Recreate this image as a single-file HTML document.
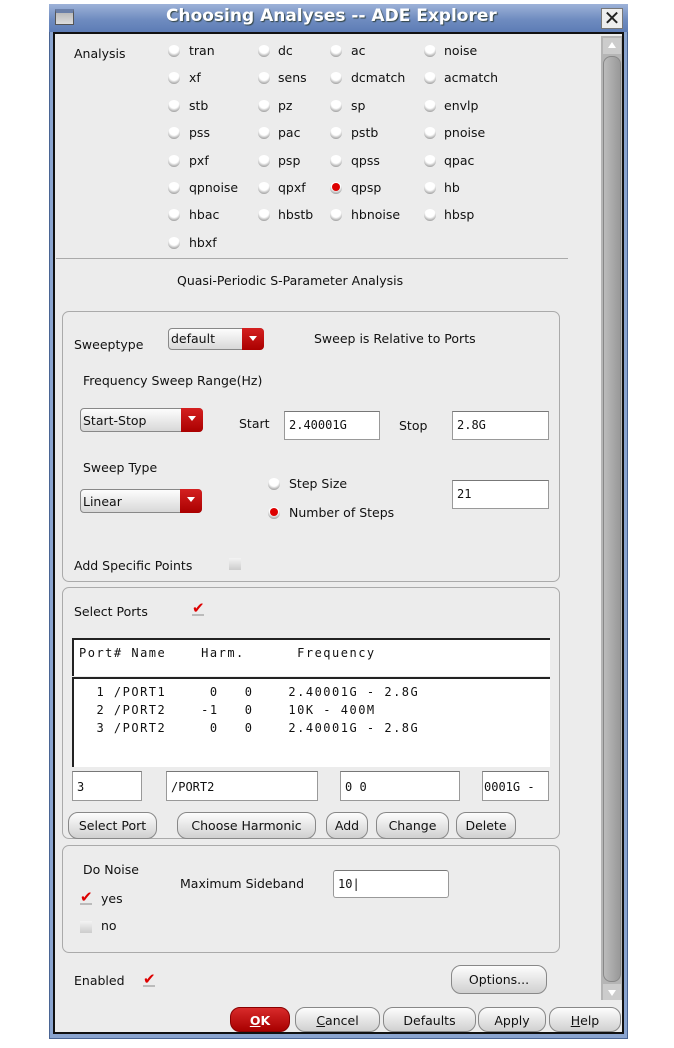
<!DOCTYPE html>
<html><head><style>
*{box-sizing:border-box;margin:0;padding:0}
body{width:674px;height:1048px;background:#fff;position:relative;overflow:hidden;font-family:"DejaVu Sans","Liberation Sans",sans-serif;font-size:12.5px;color:#111}
.a{position:absolute;white-space:pre}
.win{position:absolute;left:49px;top:4px;width:579px;height:1035px;background:#8aa4cf;border:1px solid #4a6594}
.title{position:absolute;left:49px;top:4px;width:579px;height:28px;background:linear-gradient(#9db2d8,#6f8cc0 55%,#5d7cb5);}
.content{position:absolute;left:53px;top:32px;width:571px;height:1002px;background:#ececec;border:2px solid #111}
.r{position:absolute;width:12px;height:12px;border-radius:50%;background:radial-gradient(circle at 50% 30%,#fff 45%,#bbb 70%,#777)}
.r.on::after{content:"";position:absolute;left:2px;top:1px;width:8px;height:8px;border-radius:50%;background:#d00}
.box{position:absolute;border:1px solid #aaa;border-radius:7px}
.inp{position:absolute;background:#fff;border:1px solid #999;border-top-color:#777;font-family:"DejaVu Sans Mono","Liberation Mono",monospace;font-size:12px;padding:6px 0 0 4px}
.dd{position:absolute;border:1px solid #888;border-radius:4px;background:linear-gradient(#fdfdfd,#d8d8d8);padding:2px 0 0 2px}
.dd b{position:absolute;right:-1px;top:-1px;bottom:-1px;width:22px;background:linear-gradient(#d42020,#a00);border-radius:0 4px 4px 0}
.dd b::after{content:"";position:absolute;left:7px;top:8px;border:4px solid transparent;border-top:5px solid #fff}
.btn{position:absolute;border:1px solid #888;border-radius:10px;background:linear-gradient(#fdfdfd,#d0d0d0);text-align:center;padding-top:5px}
.ck{position:absolute;width:12px;height:12px;background:linear-gradient(#f4f4f4,#ccc)}
.ck.on::after{content:"✔";position:absolute;left:0;top:-5px;color:#d00;font-size:15px;font-weight:bold}
.mono{font-family:"DejaVu Sans Mono","Liberation Mono",monospace;font-size:12px;letter-spacing:1.5px}
</style></head><body>
<div class="win"></div>
<div class="title"></div>
<div class="a" style="left:55px;top:9px;width:19px;height:16px;background:linear-gradient(#bbb,#ddd);border:1px solid #555;border-top:4px solid #6a7fa8"></div>
<div class="a" style="left:166px;top:6px;font-weight:bold;font-size:17px;color:#fff;text-shadow:1px 1px 1px #344">Choosing Analyses -- ADE Explorer</div>
<div class="a" style="left:601px;top:8px;width:22px;height:21px;background:#eee;border:1px solid #777;font-size:20px;line-height:19px;text-align:center;color:#222">✕</div>
<div class="content"></div>
<div class="a" style="left:601px;top:36px;width:21px;height:964px;background:#b5b5b5"></div>
<div class="a" style="left:603px;top:38px;width:18px;height:16px;background:#ccc"></div>
<div class="a" style="left:608px;top:42px;border:4px solid transparent;border-bottom:6px solid #fff;border-top:0"></div>
<div class="a" style="left:603px;top:56px;width:18px;height:926px;background:linear-gradient(90deg,#bbb,#999);border-radius:8px;border:1px solid #888"></div>
<div class="a" style="left:603px;top:984px;width:18px;height:16px;background:#ccc"></div>
<div class="a" style="left:608px;top:990px;border:4px solid transparent;border-top:6px solid #fff;border-bottom:0"></div>

<div class="a" style="left:74px;top:46px">Analysis</div>
<div class="r" style="left:168px;top:45px"></div><div class="a" style="left:189px;top:43px">tran</div>
<div class="r" style="left:258px;top:45px"></div><div class="a" style="left:278px;top:43px">dc</div>
<div class="r" style="left:330px;top:45px"></div><div class="a" style="left:351px;top:43px">ac</div>
<div class="r" style="left:424px;top:45px"></div><div class="a" style="left:444px;top:43px">noise</div>
<div class="r" style="left:168px;top:72px"></div><div class="a" style="left:189px;top:70px">xf</div>
<div class="r" style="left:258px;top:72px"></div><div class="a" style="left:278px;top:70px">sens</div>
<div class="r" style="left:330px;top:72px"></div><div class="a" style="left:351px;top:70px">dcmatch</div>
<div class="r" style="left:424px;top:72px"></div><div class="a" style="left:444px;top:70px">acmatch</div>
<div class="r" style="left:168px;top:100px"></div><div class="a" style="left:189px;top:98px">stb</div>
<div class="r" style="left:258px;top:100px"></div><div class="a" style="left:278px;top:98px">pz</div>
<div class="r" style="left:330px;top:100px"></div><div class="a" style="left:351px;top:98px">sp</div>
<div class="r" style="left:424px;top:100px"></div><div class="a" style="left:444px;top:98px">envlp</div>
<div class="r" style="left:168px;top:127px"></div><div class="a" style="left:189px;top:125px">pss</div>
<div class="r" style="left:258px;top:127px"></div><div class="a" style="left:278px;top:125px">pac</div>
<div class="r" style="left:330px;top:127px"></div><div class="a" style="left:351px;top:125px">pstb</div>
<div class="r" style="left:424px;top:127px"></div><div class="a" style="left:444px;top:125px">pnoise</div>
<div class="r" style="left:168px;top:155px"></div><div class="a" style="left:189px;top:153px">pxf</div>
<div class="r" style="left:258px;top:155px"></div><div class="a" style="left:278px;top:153px">psp</div>
<div class="r" style="left:330px;top:155px"></div><div class="a" style="left:351px;top:153px">qpss</div>
<div class="r" style="left:424px;top:155px"></div><div class="a" style="left:444px;top:153px">qpac</div>
<div class="r" style="left:168px;top:182px"></div><div class="a" style="left:189px;top:180px">qpnoise</div>
<div class="r" style="left:258px;top:182px"></div><div class="a" style="left:278px;top:180px">qpxf</div>
<div class="r on" style="left:330px;top:182px"></div><div class="a" style="left:351px;top:180px">qpsp</div>
<div class="r" style="left:424px;top:182px"></div><div class="a" style="left:444px;top:180px">hb</div>
<div class="r" style="left:168px;top:209px"></div><div class="a" style="left:189px;top:207px">hbac</div>
<div class="r" style="left:258px;top:209px"></div><div class="a" style="left:278px;top:207px">hbstb</div>
<div class="r" style="left:330px;top:209px"></div><div class="a" style="left:351px;top:207px">hbnoise</div>
<div class="r" style="left:424px;top:209px"></div><div class="a" style="left:444px;top:207px">hbsp</div>
<div class="r" style="left:168px;top:237px"></div><div class="a" style="left:189px;top:235px">hbxf</div>

<div class="a" style="left:56px;top:258px;width:512px;height:1px;background:#aaa"></div>
<div class="a" style="left:177px;top:273px">Quasi-Periodic S-Parameter Analysis</div>

<div class="box" style="left:62px;top:311px;width:498px;height:271px"></div>
<div class="a" style="left:74px;top:337px">Sweeptype</div>
<div class="dd" style="left:168px;top:328px;width:96px;height:22px">default<b></b></div>
<div class="a" style="left:314px;top:331px">Sweep is Relative to Ports</div>
<div class="a" style="left:83px;top:373px">Frequency Sweep Range(Hz)</div>
<div class="dd" style="left:80px;top:408px;width:123px;height:24px;padding-top:4px">Start-Stop<b></b></div>
<div class="a" style="left:239px;top:416px">Start</div>
<div class="inp" style="left:284px;top:411px;width:96px;height:29px">2.40001G</div>
<div class="a" style="left:399px;top:418px">Stop</div>
<div class="inp" style="left:452px;top:411px;width:97px;height:29px">2.8G</div>
<div class="a" style="left:83px;top:460px">Sweep Type</div>
<div class="dd" style="left:80px;top:489px;width:122px;height:24px;padding-top:4px">Linear<b></b></div>
<div class="r" style="left:268px;top:478px"></div><div class="a" style="left:289px;top:476px">Step Size</div>
<div class="r on" style="left:268px;top:507px"></div><div class="a" style="left:289px;top:505px">Number of Steps</div>
<div class="inp" style="left:452px;top:480px;width:97px;height:29px">21</div>
<div class="a" style="left:74px;top:558px">Add Specific Points</div>
<div class="ck" style="left:229px;top:558px"></div>

<div class="box" style="left:62px;top:587px;width:498px;height:252px"></div>
<div class="a" style="left:74px;top:604px">Select Ports</div>
<div class="ck on" style="left:192px;top:604px;background:none;border-bottom:2px solid #bbb"></div>
<div class="a mono" style="left:72px;top:638px;width:478px;height:38px;background:#fff;border-top:2px solid #222;border-left:2px solid #222;padding:6px 0 0 5px">Port# Name    Harm.      Frequency</div>
<div class="a mono" style="left:72px;top:677px;width:478px;height:90px;background:#fff;border-top:2px solid #222;border-left:2px solid #222;padding:4px 0 0 5px;line-height:18px">  1 /PORT1     0   0    2.40001G - 2.8G
  2 /PORT2    -1   0    10K - 400M
  3 /PORT2     0   0    2.40001G - 2.8G</div>
<div class="inp" style="left:72px;top:771px;width:70px;height:30px;padding-top:8px">3</div>
<div class="inp" style="left:166px;top:771px;width:152px;height:30px;padding-top:8px">/PORT2</div>
<div class="inp" style="left:340px;top:771px;width:120px;height:30px;padding-top:8px">0 0</div>
<div class="inp" style="left:482px;top:771px;width:67px;height:30px;padding:8px 0 0 1px">0001G -</div>
<div class="btn" style="left:68px;top:812px;width:89px;height:27px">Select Port</div>
<div class="btn" style="left:177px;top:812px;width:139px;height:27px">Choose Harmonic</div>
<div class="btn" style="left:326px;top:812px;width:42px;height:27px">Add</div>
<div class="btn" style="left:376px;top:812px;width:73px;height:27px">Change</div>
<div class="btn" style="left:456px;top:812px;width:60px;height:27px">Delete</div>

<div class="box" style="left:62px;top:845px;width:498px;height:108px"></div>
<div class="a" style="left:83px;top:862px">Do Noise</div>
<div class="ck on" style="left:80px;top:893px;background:none;border-bottom:2px solid #bbb"></div><div class="a" style="left:101px;top:891px">yes</div>
<div class="ck" style="left:80px;top:921px"></div><div class="a" style="left:101px;top:918px">no</div>
<div class="a" style="left:180px;top:876px">Maximum Sideband</div>
<div class="inp" style="left:333px;top:870px;width:116px;height:28px;border-radius:3px">10|</div>

<div class="a" style="left:74px;top:973px">Enabled</div>
<div class="ck on" style="left:143px;top:975px;background:none;border-bottom:2px solid #bbb"></div>
<div class="btn" style="left:451px;top:965px;width:96px;height:29px;padding-top:6px">Options...</div>

<div class="btn" style="left:230px;top:1007px;width:60px;height:25px;background:linear-gradient(#d82a2a,#a80000);color:#fff;font-weight:bold;border-color:#800"><u>O</u>K</div>
<div class="btn" style="left:295px;top:1007px;width:85px;height:25px"><u>C</u>ancel</div>
<div class="btn" style="left:383px;top:1007px;width:93px;height:25px">Defaults</div>
<div class="btn" style="left:478px;top:1007px;width:68px;height:25px">Apply</div>
<div class="btn" style="left:549px;top:1007px;width:72px;height:25px"><u>H</u>elp</div>
</body></html>
